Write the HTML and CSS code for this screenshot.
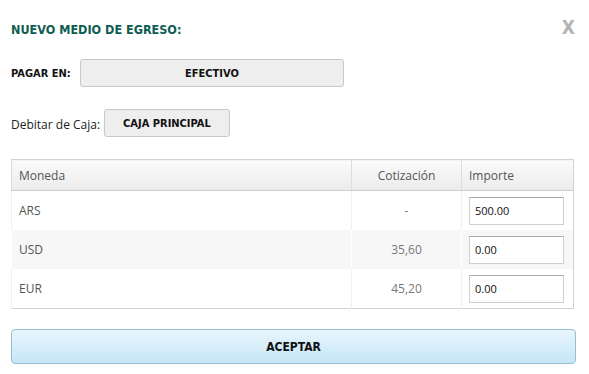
FILE: index.html
```html
<!DOCTYPE html>
<html>
<head>
<meta http-equiv="Content-Type" content="text/html; charset=utf-8"/>
<title>Nuevo medio de egreso</title>
<link rel="stylesheet" href="styles.css">
</head>
<body>
<div class="dialog">
  <div class="head">
    <h1 class="title">NUEVO MEDIO DE EGRESO:</h1>
    <span class="close">X</span>
  </div>

  <div class="field">
    <span class="label-bold">PAGAR EN:</span>
    <button class="btn btn-wide">EFECTIVO</button>
  </div>

  <div class="field">
    <span class="label">Debitar de Caja:</span>
    <button class="btn">CAJA PRINCIPAL</button>
  </div>

  <table class="grid">
    <thead>
      <tr>
        <th class="col-moneda">Moneda</th>
        <th class="col-cot">Cotización</th>
        <th class="col-imp">Importe</th>
      </tr>
    </thead>
    <tbody>
      <tr>
        <td>ARS</td>
        <td class="num">-</td>
        <td class="imp"><input type="text" value="500.00"></td>
      </tr>
      <tr class="alt">
        <td>USD</td>
        <td class="num">35,60</td>
        <td class="imp"><input type="text" value="0.00"></td>
      </tr>
      <tr>
        <td>EUR</td>
        <td class="num">45,20</td>
        <td class="imp"><input type="text" value="0.00"></td>
      </tr>
    </tbody>
  </table>

  <button class="btn-ok">ACEPTAR</button>
</div>
</body>
</html>
```

FILE: styles.css
```css
body {
  margin: 0;
  background-color: white;
  font-family: "Open Sans", sans-serif;
  font-size: 12px;
  color: #333;
}

.dialog {
  padding: 0 14px 0 11px;
}

.head {
  display: flex;
  justify-content: space-between;
  align-items: center;
  height: 58px;
}

.title {
  margin: 0;
  font-family: "DejaVu Sans Condensed", sans-serif;
  font-size: 12.5px;
  font-weight: bold;
  color: #0e5c52;
}

.close {
  font-family: "DejaVu Sans Condensed", sans-serif;
  font-size: 19px;
  font-weight: bold;
  color: #b3b3b3;
  margin-right: 0;
  margin-top: -4px;
}

.field {
  display: flex;
  align-items: center;
  height: 28px;
  margin-top: 1px;
  margin-bottom: 22px;
}

.label-bold {
  font-family: "DejaVu Sans Condensed", sans-serif;
  font-weight: bold;
  font-size: 11px;
  color: #111;
  width: 69px;
}

.label {
  color: #222;
  margin-right: 4px;
  margin-top: 2px;
}

.btn {
  height: 28px;
  padding: 0 18px;
  background: #eeeeee;
  border: 1px solid #c8c8c8;
  border-radius: 3px;
  font-family: "DejaVu Sans Condensed", sans-serif;
  font-weight: bold;
  font-size: 11px;
  color: #111;
}

.btn-wide {
  width: 264px;
}

.grid {
  width: 563px;
  border-collapse: collapse;
  border: 1px solid #d2d2d2;
  margin-top: 1px;
}

.grid th {
  height: 30px;
  padding: 0 7px;
  font-weight: normal;
  text-align: left;
  color: #555;
  background: linear-gradient(#fbfbfb, #ececec);
  border-bottom: 1px solid #cfcfcf;
  border-left: 1px solid #dcdcdc;
}

.grid th.col-cot {
  text-align: center;
  width: 95px;
}

.grid th.col-imp {
  width: 96px;
}

.grid td {
  height: 39px;
  padding: 0 7px;
  color: #555;
  border-left: 1px solid #f0f0f0;
}

.grid tr.alt td {
  background: #f7f7f7;
  border-left-color: #ffffff;
}

.grid td.num {
  text-align: center;
  color: #777;
}

.grid td.imp {
  padding-right: 9px;
}

.imp input {
  box-sizing: border-box;
  width: 95px;
  height: 28px;
  padding: 0 5px;
  border: 1px solid #cfcfcf;
  border-top-color: #aaa;
  background: #fff;
  font-family: "Open Sans", sans-serif;
  font-size: 11px;
  color: #111;
}

.btn-ok {
  display: block;
  width: 565px;
  height: 35px;
  margin-top: 20px;
  background: linear-gradient(#e8f6fd, #c6e5f7);
  border: 1px solid #95bfd4;
  border-radius: 4px;
  font-family: "DejaVu Sans Condensed", sans-serif;
  font-weight: bold;
  font-size: 12px;
  color: #111;
}
```
